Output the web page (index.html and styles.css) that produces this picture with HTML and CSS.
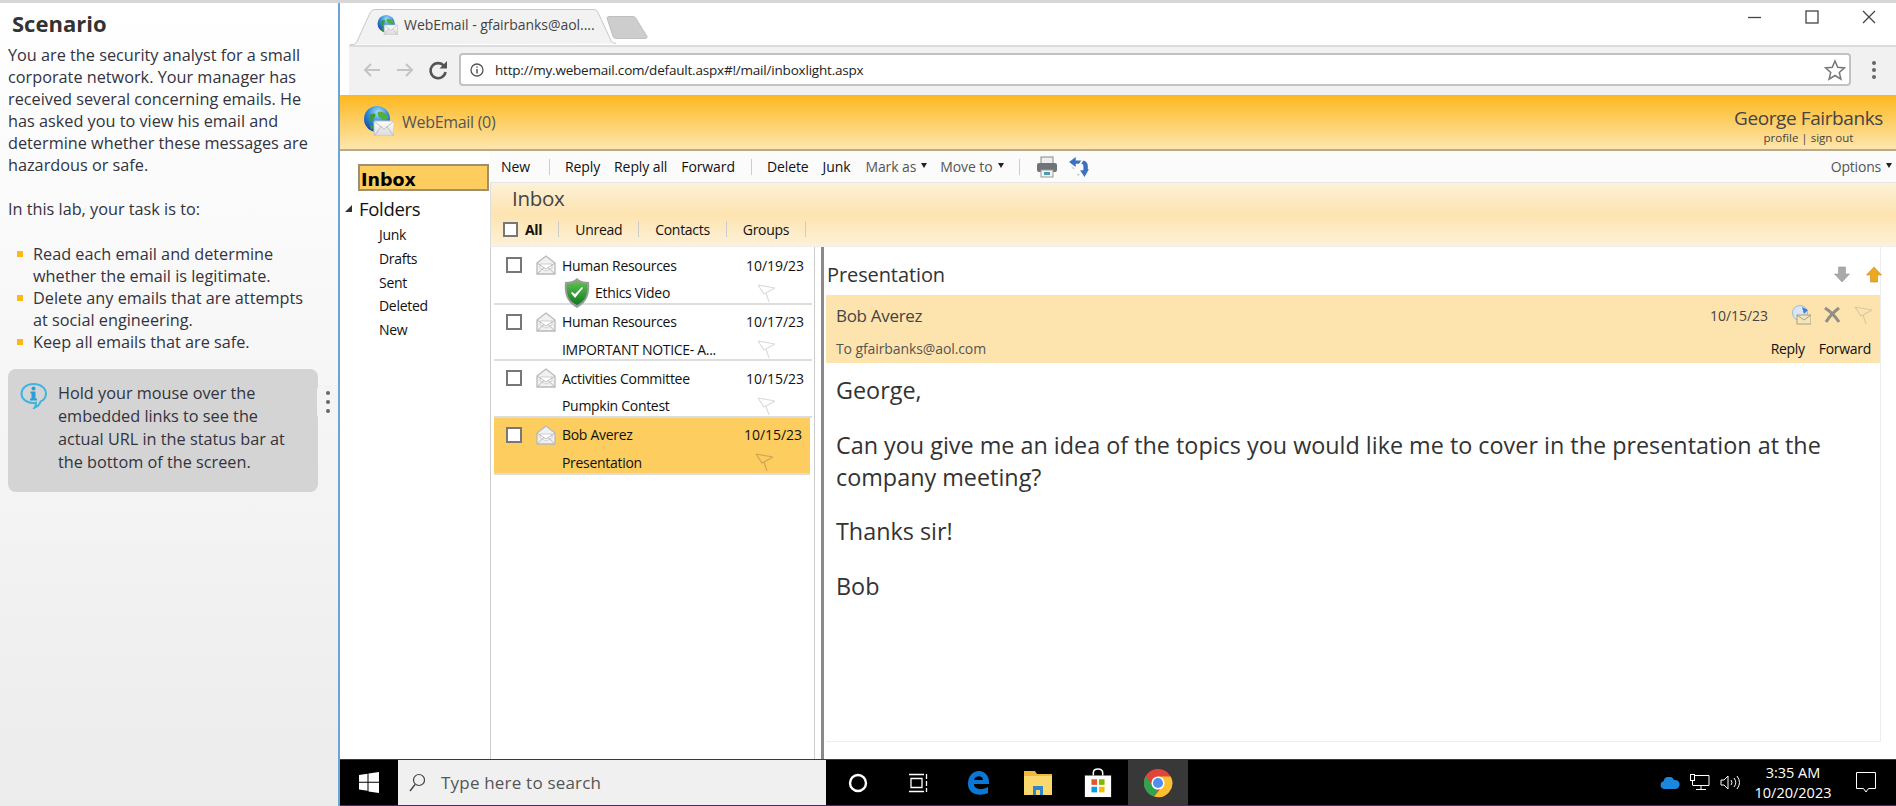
FILE: index.html
```html
<!DOCTYPE html>
<html lang="en">
<head>
  <meta charset="UTF-8">
  <title>WebEmail - gfairbanks@aol.com</title>
  <link rel="stylesheet" href="styles.css">
</head>
<body>
  <svg class="defs" aria-hidden="true">
    <defs>
      <radialGradient id="sea" cx="0.55" cy="0.25" r="0.85">
        <stop offset="0" stop-color="#a9e2f7"/>
        <stop offset="0.45" stop-color="#2f8bdc"/>
        <stop offset="1" stop-color="#0c3590"/>
      </radialGradient>
      <linearGradient id="shieldfill" x1="0" y1="0" x2="0" y2="1">
        <stop offset="0" stop-color="#5fc24f"/>
        <stop offset="1" stop-color="#0f7a22"/>
      </linearGradient>
      <linearGradient id="mailfill" x1="0" y1="0" x2="0" y2="1">
        <stop offset="0" stop-color="#ffffff"/>
        <stop offset="1" stop-color="#d9d9d9"/>
      </linearGradient>
      <symbol id="globe" viewBox="0 0 30 30">
        <circle cx="13" cy="13" r="13" fill="url(#sea)"/>
        <path d="M5 10c2-2 4-3 6-2 1 1 0 3-1 4-1 2-2 4-3 4-1-2-3-4-2-6z" fill="#3f9b35"/>
        <path d="M14 6c3-1 7 0 10 4 1 3-1 4-3 4-3 0-4-2-6-3-1-2-2-3-1-5z" fill="#55ad3b"/>
        <path d="M6 19c2 0 3 1 3 2l-1 3c-1-1-2-3-2-5z" fill="#3f9b35"/>
        <rect x="10" y="15" width="20" height="15" rx="1" fill="url(#mailfill)" stroke="#c4c4c4"/>
        <path d="M10.500 15.500l9.500 8 9.500-8M10.500 29.500l7-9M29.500 29.500l-7-9" fill="none" stroke="#bdbdbd"/>
      </symbol>
      <symbol id="openmail" viewBox="0 0 20 20">
        <path d="M1 8l9-7 9 7v11H1z" fill="#f1f1f1" stroke="#b9b9b9" stroke-width="1.300"/>
        <path d="M4 9h12v4l-6 3-6-3z" fill="#fff" stroke="#cfcfcf"/>
        <path d="M1 8l9 6 9-6M1 19l7-6.500M19 19l-7-6.500" fill="none" stroke="#b9b9b9"/>
      </symbol>
      <symbol id="flag" viewBox="0 0 18 18">
        <path d="M1 1l17 3-9 5 3 9M1 1l6 9 2-1" fill="none" stroke="currentColor" stroke-width="1.200"/>
      </symbol>
      <symbol id="shield" viewBox="0 0 26 30">
        <path d="M13 0c3 3 7 4 12 4 1 11-1 20-12 26C2 24 0 15 1 4c5 0 9-1 12-4z" fill="#9a9a9a"/>
        <path d="M13 3c3 2 6 3 10 3 1 9-1 17-10 21C4 23 2 15 3 6c4 0 7-1 10-3z" fill="url(#shieldfill)"/>
        <path d="M7 15l4 5 8-10-1-1-7 7-3-2z" fill="#fff"/>
      </symbol>
    </defs>
  </svg>

  <aside class="lab">
    <h2 class="lab-title">Scenario</h2>
    <p class="lab-text">You are the security analyst for a small corporate network. Your manager has received several concerning emails. He has asked you to view his email and determine whether these messages are hazardous or safe.</p>
    <p class="lab-text lab-task">In this lab, your task is to:</p>
    <ul class="lab-list">
      <li>Read each email and determine whether the email is legitimate.</li>
      <li>Delete any emails that are attempts at social engineering.</li>
      <li>Keep all emails that are safe.</li>
    </ul>
    <div class="tip">
      <svg class="tip-icon" viewBox="0 0 27 27">
        <path d="M13.500 2C6.500 2 1.500 6 1.500 11.500S6.500 21 13 21c1 0 2 0 3-.3 0 2-.5 3.500-1.500 5 3-1 5-3 6-6 3.500-1.800 5.500-4.800 5.500-8.200C26 6 20.500 2 13.500 2z" fill="none" stroke="#3fb4e0" stroke-width="2"/>
        <circle cx="13.500" cy="6.500" r="2" fill="#2a9fd6"/>
        <path d="M10.500 9.500h5v7h1.500v2h-7v-2H11.500v-5h-1z" fill="#2a9fd6"/>
      </svg>
      <p class="tip-text">Hold your mouse over the embedded links to see the actual URL in the status bar at the bottom of the screen.</p>
    </div>
    <div class="grip"><span></span><span></span><span></span></div>
  </aside>

  <main class="desktop">
    <div class="tabstrip">
      <div class="tab">
        <svg class="tab-shape" viewBox="0 0 266 36" preserveAspectRatio="none">
          <path d="M0 35.500h3q3 0 4-3L20 4q1.500-3.500 5-3.500h219q3 0 4 3l13 28q1 3 5 3" fill="#f2f2f2" stroke="#c8c8c8"/>
        </svg>
        <svg class="favicon"><use href="#globe"/></svg>
        <span class="tab-title">WebEmail - gfairbanks@aol....</span>
      </div>
      <svg class="newtab" viewBox="0 0 42 23">
        <path d="M1 2q0-1.500 2-1.500h24q2 0 3 2l11 18q.5 2-1.500 2H10q-2 0-3-2z" fill="#cdcdcd" stroke="#bfbfbf"/>
      </svg>
      <div class="winbtns">
        <svg class="winbtn" viewBox="0 0 14 14"><path d="M0 7.500h13" stroke="#444" stroke-width="1.300"/></svg>
        <svg class="winbtn" viewBox="0 0 14 14"><rect x="1" y="1" width="12" height="12" fill="none" stroke="#444" stroke-width="1.300"/></svg>
        <svg class="winbtn" viewBox="0 0 14 14"><path d="M1 1l12 12M13 1L1 13" stroke="#444" stroke-width="1.300"/></svg>
      </div>
    </div>

    <div class="navbar">
      <svg class="navicon" viewBox="0 0 20 20"><path d="M18 10H3M9 4l-6 6 6 6" fill="none" stroke="#c4c4c4" stroke-width="2"/></svg>
      <svg class="navicon" viewBox="0 0 20 20"><path d="M2 10h15M11 4l6 6-6 6" fill="none" stroke="#c4c4c4" stroke-width="2"/></svg>
      <svg class="navicon" viewBox="0 0 20 20"><path d="M16 6a7.500 7.500 0 1 0 1.500 6" fill="none" stroke="#555" stroke-width="2.600"/><path d="M11.500 8.500H19V1z" fill="#555"/></svg>
      <div class="address">
        <svg class="info" viewBox="0 0 14 14"><circle cx="7" cy="7" r="6" fill="none" stroke="#555" stroke-width="1.300"/><path d="M7 6v4.500M7 3.500v1.300" stroke="#555" stroke-width="1.500"/></svg>
        <span class="url">http://my.webemail.com/default.aspx#!/mail/inboxlight.aspx</span>
        <svg class="star" viewBox="0 0 22 22"><path d="M11 2l2.700 6.300 6.800.6-5.200 4.500 1.600 6.700L11 16.500 5.100 20.100l1.600-6.700L1.500 8.900l6.800-.6z" fill="none" stroke="#777" stroke-width="1.500"/></svg>
      </div>
      <div class="dots"><span></span><span></span><span></span></div>
    </div>

    <header class="brand">
      <svg class="brand-logo"><use href="#globe"/></svg>
      <span class="brand-name">WebEmail (0)</span>
      <div class="user">
        <div class="user-name">George Fairbanks</div>
        <div class="user-links">profile | sign out</div>
      </div>
    </header>

    <div class="app">
      <nav class="folders">
        <div class="folder-inbox">Inbox</div>
        <div class="folder-head"><i class="tri"></i>Folders</div>
        <ul class="folder-list">
          <li>Junk</li>
          <li>Drafts</li>
          <li>Sent</li>
          <li>Deleted</li>
          <li>New</li>
        </ul>
      </nav>

      <section class="mail">
        <div class="toolbar">
          <span class="tool tool-new">New</span><i class="sep"></i>
          <span class="tool">Reply</span>
          <span class="tool">Reply all</span>
          <span class="tool">Forward</span><i class="sep"></i>
          <span class="tool">Delete</span>
          <span class="tool tool-junk">Junk</span>
          <span class="tool tool-menu">Mark as<i class="caret"></i></span>
          <span class="tool tool-menu">Move to<i class="caret"></i></span><i class="sep"></i>
          <svg class="toolicon" viewBox="0 0 22 22">
            <rect x="5" y="1" width="12" height="7" fill="#eee" stroke="#888"/>
            <rect x="1" y="7" width="20" height="9" rx="2" fill="#6f7479"/>
            <rect x="5" y="14" width="12" height="7" fill="#f6f6f6" stroke="#999"/>
            <rect x="8" y="16" width="6" height="3" fill="#4a9bb5"/>
          </svg>
          <svg class="toolicon" viewBox="0 0 20 20">
            <path d="M1 5.500L7 1v3h5l-2 3H7v3z" fill="#3a72bf"/>
            <path d="M19 12l-4 7-4-6h3V9q0-2-2-2l2-3q4 1 4 5v3z" fill="#3a72bf"/>
            <path d="M3 10l3 1-1 1zM8 16l3 1-2 1z" fill="#bcbcbc"/>
          </svg>
          <span class="tool tool-menu tool-options">Options<i class="caret"></i></span>
        </div>

        <div class="inboxhead">
          <div class="inbox-title">Inbox</div>
          <div class="filters">
            <i class="check check-small"></i>
            <span class="filter filter-on">All</span><i class="sep"></i>
            <span class="filter">Unread</span><i class="sep"></i>
            <span class="filter">Contacts</span><i class="sep"></i>
            <span class="filter">Groups</span><i class="sep"></i>
          </div>
        </div>

        <div class="split">
          <div class="list">
            <div class="row">
              <i class="check"></i>
              <svg class="mailicon"><use href="#openmail"/></svg>
              <span class="from">Human Resources</span>
              <span class="date">10/19/23</span>
              <span class="subject subject-safe">
                <svg class="shield"><use href="#shield"/></svg>Ethics Video
              </span>
              <svg class="flag"><use href="#flag"/></svg>
            </div>
            <div class="row">
              <i class="check"></i>
              <svg class="mailicon"><use href="#openmail"/></svg>
              <span class="from">Human Resources</span>
              <span class="date">10/17/23</span>
              <span class="subject">IMPORTANT NOTICE- A...</span>
              <svg class="flag"><use href="#flag"/></svg>
            </div>
            <div class="row">
              <i class="check"></i>
              <svg class="mailicon"><use href="#openmail"/></svg>
              <span class="from">Activities Committee</span>
              <span class="date">10/15/23</span>
              <span class="subject">Pumpkin Contest</span>
              <svg class="flag"><use href="#flag"/></svg>
            </div>
            <div class="row row-on">
              <i class="check"></i>
              <svg class="mailicon"><use href="#openmail"/></svg>
              <span class="from">Bob Averez</span>
              <span class="date">10/15/23</span>
              <span class="subject">Presentation</span>
              <svg class="flag"><use href="#flag"/></svg>
            </div>
          </div>
          <div class="splitter"></div>

          <article class="reader">
            <div class="reader-top">
              <h3 class="reader-title">Presentation</h3>
              <svg class="arrow" viewBox="0 0 16 17"><path d="M4.500 1h7v7h4l-7.500 8-7.500-8h4z" fill="#a9a9a9" stroke="#979797" stroke-width="0.600"/></svg>
              <svg class="arrow" viewBox="0 0 16 17"><path d="M4.500 16h7V9h4L8 1 .5 9h4z" fill="#eba825" stroke="#c98a14" stroke-width="0.600"/></svg>
            </div>
            <div class="band">
              <div class="band-row">
                <span class="sender">Bob Averez</span>
                <span class="band-date">10/15/23</span>
                <svg class="bandicon" viewBox="0 0 20 20">
                  <circle cx="9" cy="8" r="7.500" fill="#d8e6f6" stroke="#9fb9da"/>
                  <path d="M11 2l6 3-4 4z" fill="#3f7fd0"/>
                  <rect x="6" y="10" width="14" height="9" fill="#f4e6bb" stroke="#a9a07f"/>
                  <path d="M6 10l7 5 7-5" fill="none" stroke="#a9a07f"/>
                </svg>
                <svg class="bandicon bandicon-x" viewBox="0 0 18 18"><path d="M2 2q8 5 14 14M16 2Q8 8 3 16" fill="none" stroke="#8f8f86" stroke-width="3"/></svg>
                <svg class="bandicon bandicon-flag"><use href="#flag"/></svg>
              </div>
              <div class="band-row band-row-low">
                <span class="to">To gfairbanks@aol.com</span>
                <span class="band-link">Reply</span>
                <span class="band-link">Forward</span>
              </div>
            </div>
            <div class="body">
              <p>George,</p>
              <p>Can you give me an idea of the topics you would like me to cover in the presentation at the company meeting?</p>
              <p>Thanks sir!</p>
              <p>Bob</p>
            </div>
          </article>
        </div>
      </section>
    </div>

    <footer class="taskbar">
      <div class="slot-start">
        <svg class="win" viewBox="0 0 20 21"><path d="M0 3l8.500-1.200v8H0zM9.500 1.600L20 0v9.800H9.500zM0 10.800h8.500v8L0 17.600zM9.500 10.800H20V21L9.500 19.400z" fill="#fff"/></svg>
      </div>
      <div class="search">
        <svg class="lens" viewBox="0 0 16 20"><circle cx="10" cy="7" r="5.500" fill="none" stroke="#444" stroke-width="1.200"/><path d="M6 11.500L1 18" stroke="#444" stroke-width="1.400"/></svg>
        <span>Type here to search</span>
      </div>
      <div class="slots">
        <div class="slot"><svg viewBox="0 0 20 20" class="ic20"><circle cx="10" cy="10" r="8" fill="none" stroke="#fff" stroke-width="2.400"/></svg></div>
        <div class="slot"><svg viewBox="0 0 20 20" class="ic20"><path d="M1 1.500h15M1 18.500h15M3 5.500h11v9H3z" fill="none" stroke="#fff" stroke-width="1.300"/><path d="M18.500 1v18" stroke="#fff" stroke-width="1.300" stroke-dasharray="5 2"/></svg></div>
        <div class="slot"><svg viewBox="0 0 24 26" class="ic26"><path d="M2 14C2 6 7 1 13 1c6 0 10 5 10 11v2H8c0 5 7 7 14 3v6c-9 4-20 1-20-9zM8 10h9c0-5-8-5-9 0z" fill="#0b78d7" fill-rule="evenodd"/></svg></div>
        <div class="slot"><svg viewBox="0 0 30 26" class="ic30"><path d="M1 1h11l2 3h15v21H1z" fill="#f0b83c"/><path d="M1 6h28v19H1z" fill="#fbd86e"/><path d="M10 25v-9h10v9h-3v-5h-4v5z" fill="#2f87c9"/></svg></div>
        <div class="slot"><svg viewBox="0 0 30 32" class="ic30"><path d="M10 8V5q0-4 5-4t5 4v3" fill="none" stroke="#fff" stroke-width="1.600"/><path d="M1 8h28v23H1z" fill="#fff"/><path d="M8 12h6v6H8z" fill="#e3562e"/><path d="M16 12h6v6h-6z" fill="#7fb900"/><path d="M8 20h6v6H8z" fill="#0a9ce8"/><path d="M16 20h6v6h-6z" fill="#fdb900"/></svg></div>
        <div class="slot slot-on">
          <svg viewBox="0 0 32 32" class="ic30">
            <circle cx="16" cy="16" r="15" fill="#e0453a"/>
            <path d="M3 8.500A15 15 0 0 0 12 30.500l6-10.500-8-1z" fill="#2fa44f"/>
            <path d="M16 9h13.500A15 15 0 0 1 12 30.500L21 19z" fill="#fbc02d"/>
            <circle cx="16" cy="16" r="7" fill="#fff"/>
            <circle cx="16" cy="16" r="5.400" fill="#4f8ff0"/>
          </svg>
        </div>
      </div>
      <div class="tray">
        <svg class="trayicon" viewBox="0 0 20 12"><path d="M4 12a4 4 0 0 1-.5-7.800A5.500 5.500 0 0 1 14 3a4.500 4.500 0 0 1 2 9z" fill="#1b87dd"/></svg>
        <svg class="trayicon trayicon-net" viewBox="0 0 20 17"><path d="M5 1.500h14v10H3M11 11.500v3.500M6 15.500h10" fill="none" stroke="#fff"/><rect x="0.500" y="0.500" width="4" height="6" fill="#000" stroke="#fff"/><path d="M2.500 6.500v5" stroke="#fff"/></svg>
        <svg class="trayicon trayicon-net" viewBox="0 0 20 17"><path d="M1 6h3l4-4v13l-4-4H1z" fill="none" stroke="#fff"/><path d="M11 6q2 2.500 0 5M14 4q3.500 4.500 0 9M17 2q5 6.500 0 13" fill="none" stroke="#fff"/></svg>
        <div class="clock"><div>3:35 AM</div><div>10/20/2023</div></div>
        <svg class="notify" viewBox="0 0 20 21"><path d="M.5.500h19v16h-7L10 20l-2.500-3.500h-7z" fill="none" stroke="#fff"/></svg>
      </div>
    </footer>
  </main>
</body>
</html>
```

FILE: styles.css
```css
* {
  box-sizing: border-box;
}
html, body {
  height: 100%;
  margin: 0;
}
body {
  display: flex;
  height: 806px;
  overflow: hidden;
  border-top: 3px solid #d6d6d6;
  background: #fff;
  color: #222;
  font-family: "Open Sans", sans-serif;
}
.defs {
  position: absolute;
  width: 0;
  height: 0;
}
p, ul, h2, h3 {
  margin: 0;
  padding: 0;
}
ul {
  list-style: none;
}
i {
  font-style: normal;
}

/* left lab panel */
.lab {
  position: relative;
  flex: none;
  width: 340px;
  padding: 6px 20px 0 8px;
  border-right: 2px solid #6ea4d4;
  background: linear-gradient(#fff, #ececec);
  color: #33333d;
  font-size: 16.250px;
  line-height: 22px;
}
.lab-title {
  height: 35px;
  padding-left: 4px;
  color: #333;
  font-size: 22px;
  line-height: 28px;
}
.lab-task {
  margin-top: 22px;
}
.lab-list {
  margin-top: 23px;
  padding-right: 8px;
}
.lab-list li {
  padding-left: 25px;
}
.lab-list li::before {
  content: "";
  display: inline-block;
  width: 6px;
  height: 6px;
  margin-left: -16px;
  margin-right: 10px;
  vertical-align: 3px;
  background: #fdb813;
}
.tip {
  display: flex;
  gap: 11px;
  width: 310px;
  height: 123px;
  margin-top: 16px;
  padding: 13px 20px 0 12px;
  border-radius: 8px;
  background: #d4d4d4;
  line-height: 23px;
}
.tip-icon {
  flex: none;
  width: 27px;
  height: 27px;
}
.grip {
  position: absolute;
  top: 382px;
  right: 0;
  display: flex;
  flex-direction: column;
  justify-content: center;
  align-items: center;
  gap: 5px;
  width: 21px;
  height: 34px;
  border-radius: 5px 0 0 5px;
  background: #f4f4f4;
}
.grip span {
  width: 4px;
  height: 4px;
  border-radius: 50%;
  background: #666;
}

/* browser */
.desktop {
  flex: 1;
  display: flex;
  flex-direction: column;
  min-width: 0;
}
.tabstrip {
  display: flex;
  align-items: flex-end;
  flex: none;
  height: 42px;
  padding-left: 10px;
}
.tab {
  position: relative;
  display: flex;
  align-items: center;
  width: 266px;
  height: 36px;
  padding: 0 0 5px 27px;
}
.tab-shape {
  position: absolute;
  top: 0;
  left: 0;
  width: 100%;
  height: 100%;
}
.favicon {
  position: relative;
  width: 21px;
  height: 20px;
}
.tab-title {
  position: relative;
  margin-left: 6px;
  color: #444;
  font-size: 14px;
  letter-spacing: -0.05px;
  white-space: nowrap;
}
.newtab {
  width: 42px;
  height: 23px;
  margin: 0 0 6px -10px;
}
.winbtns {
  display: flex;
  gap: 43px;
  align-self: flex-start;
  margin: 7px 20px 0 auto;
}
.winbtn {
  width: 14px;
  height: 14px;
}
.navbar {
  display: flex;
  align-items: center;
  flex: none;
  height: 50px;
  margin-left: 9px;
  padding: 0 0 3px 13px;
  border-top: 2px solid #dcdcdc;
  background: #f1f1f1;
}
.navicon {
  width: 20px;
  height: 20px;
  margin-right: 13px;
}
.address {
  display: flex;
  align-items: center;
  width: 1392px;
  height: 33px;
  margin-left: -2px;
  padding: 0 3px 0 9px;
  border: 2px solid #c2c2c2;
  border-radius: 4px;
  background: #fff;
}
.info {
  width: 14px;
  height: 14px;
}
.url {
  margin-left: 11px;
  color: #222;
  font-size: 13.500px;
  letter-spacing: -0.2px;
}
.star {
  width: 22px;
  height: 22px;
  margin-left: auto;
}
.dots {
  display: flex;
  flex-direction: column;
  gap: 3px;
  margin-left: 21px;
}
.dots span {
  width: 4px;
  height: 4px;
  border-radius: 50%;
  background: #666;
}

/* webmail header */
.brand {
  display: flex;
  align-items: center;
  flex: none;
  height: 56px;
  padding: 0 13px 3px 24px;
  border-bottom: 2px solid #b9aa8c;
  background: linear-gradient(#fdb81e, #fde6ae);
}
.brand-logo {
  width: 30px;
  height: 30px;
}
.brand-name {
  margin: 2px 0 0 8px;
  color: #555;
  font-size: 16px;
  letter-spacing: -0.3px;
}
.user {
  margin: 9px 0 0 auto;
  text-align: center;
  color: #444;
}
.user-name {
  font-size: 19px;
  line-height: 24px;
  letter-spacing: -0.4px;
}
.user-links {
  margin-top: 1px;
  font-size: 11.500px;
  line-height: 14px;
}

.app {
  flex: 1;
  display: flex;
  min-height: 0;
  font-size: 14px;
  letter-spacing: -0.3px;
  color: #111;
}

/* folders column */
.folders {
  flex: none;
  width: 150px;
  padding: 13px 1px 0 18px;
}
.folder-inbox {
  height: 27px;
  padding-left: 1px;
  border: 2px solid #a08f6e;
  background: #fdcd5f;
  color: #000;
  font-family: "DejaVu Sans", sans-serif;
  font-size: 17.500px;
  font-weight: bold;
  line-height: 28px;
  letter-spacing: 0;
}
.folder-head {
  display: flex;
  align-items: center;
  height: 24px;
  margin: 5px 0 0 -13px;
  font-size: 18.500px;
}
.tri {
  width: 0;
  height: 0;
  margin-right: 7px;
  border-style: solid;
  border-width: 0 0 7px 7px;
  border-color: transparent transparent #333 transparent;
}
.folder-list {
  margin-top: 3px;
  padding-left: 21px;
}
.folder-list li {
  height: 23.800px;
  line-height: 23.800px;
}

/* mail column */
.mail {
  flex: 1;
  display: flex;
  flex-direction: column;
  min-width: 0;
}
.toolbar {
  display: flex;
  align-items: center;
  flex: none;
  height: 32px;
  padding-left: 11px;
  border-bottom: 1px solid #e6e6e6;
  background: #fbfbfb;
  letter-spacing: -0.1px;
}
.tool {
  margin-right: 14px;
  white-space: nowrap;
}
.tool-new {
  margin-right: 17px;
}
.tool-junk {
  margin-right: 15px;
}
.tool-menu {
  margin-right: 13px;
  color: #555;
}
.tool-options {
  margin: 0 4px 0 auto;
  letter-spacing: -0.2px;
}
.caret {
  display: inline-block;
  width: 0;
  height: 0;
  margin-left: 5px;
  vertical-align: 4px;
  border-style: solid;
  border-width: 5px 3px 0 3px;
  border-color: #222 transparent transparent transparent;
}
.sep {
  flex: none;
  width: 1px;
  height: 16px;
  margin-right: 16px;
  background: #ccc;
}
.toolbar .sep {
  margin-right: 15px;
}
.toolbar .tool + .sep {
  margin-left: 2px;
}
.toolicon {
  width: 22px;
  height: 22px;
  margin: 0 9px 0 1px;
}
.inboxhead {
  flex: none;
  height: 64px;
  border-left: 1px solid #ddd;
  border-bottom: 1px solid #eee;
  background: linear-gradient(#fdf1d8, #fde4b0 50%, #fdf1d8);
}
.inbox-title {
  height: 30px;
  padding-left: 21px;
  color: #444;
  font-size: 20.500px;
  line-height: 30px;
}
.filters {
  display: flex;
  align-items: center;
  height: 32px;
  padding-left: 12px;
}
.filter {
  margin-right: 16px;
}
.filter-on {
  font-weight: bold;
  margin-left: 7px;
}
.split {
  flex: 1;
  display: flex;
  min-height: 0;
}

/* message list */
.list {
  flex: none;
  width: 325px;
  padding: 1px 2px 0 3px;
  border-left: 1px solid #ccc;
  border-right: 1px solid #ccc;
}
.row {
  display: grid;
  grid-template-columns: 42px 26px 1fr 66px;
  grid-template-rows: 28px 27px;
  align-items: center;
  height: 56.670px;
  padding-top: 3px;
  border-bottom: 2px solid #ddd;
}
.row-on {
  background: #fdcd5f;
  margin-right: 2px;
}
.check {
  display: block;
  width: 16px;
  height: 16px;
  margin-left: 12px;
  border: 2px solid #777;
  background: #fff;
}
.check-small {
  margin-left: 0;
  width: 15px;
  height: 15px;
}
.mailicon {
  width: 20px;
  height: 20px;
}
.date {
  font-size: 14px;
  letter-spacing: -0.05px;
}
.subject {
  grid-column: 3;
  grid-row: 2;
  display: flex;
  align-items: center;
  white-space: nowrap;
}
.subject-safe {
  margin-left: 2px;
}
.shield {
  width: 26px;
  height: 30px;
  margin-right: 5px;
}
.flag {
  grid-column: 4;
  grid-row: 2;
  width: 18px;
  height: 18px;
  margin-left: 11px;
  color: #dcdcdc;
}
.row-on .flag {
  color: #cfa552;
}
.splitter {
  flex: none;
  width: 3px;
  margin-left: 6px;
  background: #8a8a8a;
}

/* reading pane */
.reader {
  flex: 1;
  min-width: 0;
  margin-bottom: 17px;
  margin-right: 15px;
  margin-left: 2px;
  border-right: 1px solid #eee;
  border-bottom: 1px solid #eee;
}
.reader-top {
  display: flex;
  align-items: center;
  height: 48px;
  padding: 6px 0 0 1px;
  margin-right: -2px;
}
.reader-title {
  margin-right: auto;
  color: #333;
  font-size: 20px;
  font-weight: normal;
  letter-spacing: -0.1px;
}
.arrow {
  width: 16px;
  height: 17px;
  margin-left: 16px;
}
.band {
  height: 68px;
  padding: 0 9px 0 10px;
  background: #fde4ae;
}
.band-row {
  display: flex;
  align-items: center;
  height: 40px;
}
.band-row-low {
  height: 26px;
}
.sender {
  margin-right: auto;
  color: #444;
  font-size: 17px;
}
.band-date {
  color: #444;
  margin-right: 23px;
  letter-spacing: -0.05px;
}
.bandicon {
  width: 20px;
  height: 20px;
  margin-right: 12px;
}
.bandicon-x {
  width: 18px;
  height: 18px;
  margin-right: 13px;
}
.bandicon-flag {
  width: 18px;
  height: 18px;
  margin-right: -1px;
  color: #d9c9a0;
}
.to {
  margin-right: auto;
  color: #555;
  letter-spacing: -0.1px;
}
.band-link {
  margin-left: 14px;
}
.body {
  padding: 11px 0 0 10px;
  color: #333;
  font-size: 23.360px;
  line-height: 32px;
  letter-spacing: 0;
}
.body p {
  margin-bottom: 22.500px;
}

/* windows taskbar */
.taskbar {
  display: flex;
  flex: none;
  height: 47px;
  border-top: 1px solid #23405a;
  border-bottom: 1px solid #4a2e5c;
  background: #000;
  color: #fff;
}
.slot-start {
  display: flex;
  align-items: center;
  justify-content: center;
  flex: none;
  width: 58px;
}
.win {
  width: 20px;
  height: 21px;
}
.search {
  display: flex;
  align-items: center;
  flex: none;
  width: 428px;
  padding-left: 11px;
  background: #f0f0f0;
  color: #555;
  font-size: 17px;
  letter-spacing: 0.2px;
}
.lens {
  width: 16px;
  height: 20px;
  margin-right: 16px;
}
.slots {
  display: flex;
  margin-left: 2px;
}
.slot {
  display: flex;
  align-items: center;
  justify-content: center;
  width: 60px;
}
.slot-on {
  background: #383838;
}
.ic20 {
  width: 20px;
  height: 20px;
}
.ic26 {
  width: 24px;
  height: 26px;
}
.ic30 {
  width: 30px;
  height: 30px;
}
.tray {
  display: flex;
  align-items: center;
  flex: 1;
  padding-right: 20px;
  justify-content: flex-end;
}
.trayicon {
  width: 20px;
  height: 12px;
  margin-right: 10px;
}
.trayicon-net {
  height: 17px;
}
.clock {
  width: 86px;
  margin: 0 20px 0 0;
  text-align: center;
  font-size: 14.500px;
  line-height: 20px;
}
.notify {
  width: 20px;
  height: 21px;
}
```
